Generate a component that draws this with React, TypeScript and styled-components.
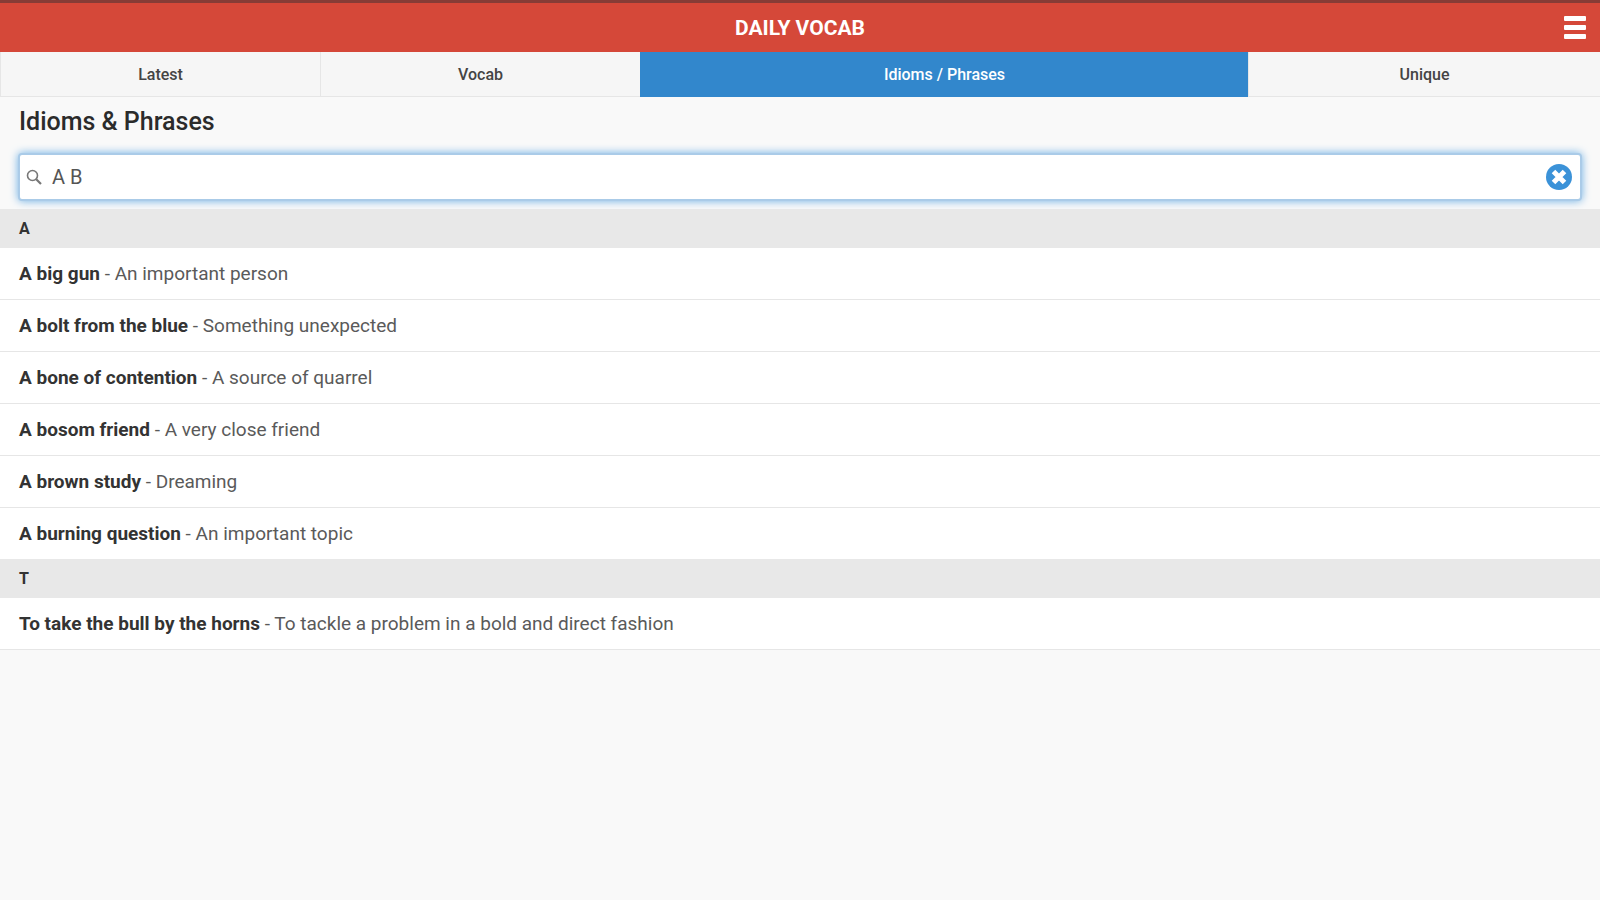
import React, { useState } from "react";
import styled, { createGlobalStyle } from "styled-components";

const GlobalStyle = createGlobalStyle`
  *, *::before, *::after { box-sizing: border-box; }
  body {
    margin: 0;
    background: #f9f9f9;
    color: #333;
    font-family: Roboto, "Liberation Sans", sans-serif;
    font-size: 19px;
    line-height: 24px;
  }
`;

const Header = styled.header`
  display: grid;
  grid-template-columns: 50px 1fr 50px;
  align-items: center;
  height: 52px;
  border-top: 3px solid #863c36;
  background: #d54839;
  color: #fff;
`;

const Title = styled.h1`
  grid-column: 2;
  margin: 0;
  font-size: 21px;
  font-weight: 700;
  line-height: 24px;
  text-align: center;
`;

const MenuButton = styled.button`
  display: flex;
  justify-content: center;
  padding: 8px 4px;
  border: 0;
  background: none;
  color: inherit;
`;

const Tabs = styled.nav`
  display: grid;
  grid-template-columns: 20fr 20fr 38fr 22fr;
`;

const Tab = styled.button<{ $active: boolean }>`
  height: 45px;
  padding: 2px 0 0;
  border: 0 solid ${(p) => (p.$active ? "#3287cc" : "#e6e6e6")};
  border-width: 0 0 1px 1px;
  background: ${(p) => (p.$active ? "#3287cc" : "#f6f6f6")};
  color: ${(p) => (p.$active ? "#fff" : "#444")};
  font-family: inherit;
  font-size: 16px;
  font-weight: 500;
  line-height: 24px;
`;

const SearchSection = styled.section`
  padding: 9px 18px 8px;
`;

const Heading = styled.h2`
  margin: 0 1px 15px;
  color: #2b2b2b;
  font-size: 25px;
  font-weight: 500;
  line-height: 32px;
`;

const SearchBox = styled.div`
  display: flex;
  align-items: center;
  height: 48px;
  padding: 0 8px 0 6px;
  border: 2px solid #aacbe8;
  border-radius: 4px;
  background: #fff;
  box-shadow: 0 0 8px #6cafe4;
`;

const SearchInput = styled.input`
  flex: 1;
  min-width: 0;
  padding: 0 10px;
  border: 0;
  outline: 0;
  background: none;
  color: #555;
  font-family: inherit;
  font-size: 20px;
  line-height: 24px;
`;

const ClearButton = styled.button`
  display: flex;
  padding: 0;
  border: 0;
  background: none;
`;

const Divider = styled.h3`
  display: flex;
  align-items: center;
  height: 39px;
  margin: 0;
  padding: 0 19px;
  background: #e8e8e8;
  color: #333;
  font-size: 16px;
  font-weight: 700;
`;

const Entries = styled.ul`
  margin: 0;
  padding: 0;
  background: #fff;
  list-style: none;

  &:last-child {
    border-bottom: 1px solid #e6e6e6;
  }
`;

const Entry = styled.li`
  padding: 14px 19px 13px;
  color: #5a5a5a;

  & + & {
    border-top: 1px solid #e6e6e6;
  }
`;

const Phrase = styled.strong`
  color: #333;
  font-weight: 700;
`;

const tabs = ["Latest", "Vocab", "Idioms / Phrases", "Unique"];

const groups = [
  {
    letter: "A",
    items: [
      ["A big gun", "An important person"],
      ["A bolt from the blue", "Something unexpected"],
      ["A bone of contention", "A source of quarrel"],
      ["A bosom friend", "A very close friend"],
      ["A brown study", "Dreaming"],
      ["A burning question", "An important topic"],
    ],
  },
  {
    letter: "T",
    items: [
      ["To take the bull by the horns", "To tackle a problem in a bold and direct fashion"],
    ],
  },
];

const MenuIcon = () => (
  <svg width="22" height="24" viewBox="0 0 22 24" fill="currentColor" aria-hidden="true">
    <rect y="0" width="22" height="5" rx="1" />
    <rect y="9" width="22" height="5" rx="1" />
    <rect y="18" width="22" height="5" rx="1" />
  </svg>
);

const SearchIcon = () => (
  <svg width="16" height="16" viewBox="0 0 16 16" fill="none" stroke="#777" aria-hidden="true">
    <circle cx="6.5" cy="6.5" r="5" strokeWidth="1.6" />
    <path d="M10.2 10.2 15 15" strokeWidth="2.2" />
  </svg>
);

const ClearIcon = () => (
  <svg width="26" height="26" viewBox="0 0 26 26" aria-hidden="true">
    <circle cx="13" cy="13" r="13" fill="#3b92d8" />
    <path d="M7.5 7.5 18.5 18.5M18.5 7.5 7.5 18.5" stroke="#fff" strokeWidth="5" />
  </svg>
);

export default function App() {
  const [tab, setTab] = useState("Idioms / Phrases");
  const [query, setQuery] = useState("A B");

  return (
    <>
      <GlobalStyle />
      <Header>
        <Title>DAILY VOCAB</Title>
        <MenuButton type="button" aria-label="Menu">
          <MenuIcon />
        </MenuButton>
      </Header>
      <Tabs>
        {tabs.map((name) => (
          <Tab key={name} type="button" $active={name === tab} onClick={() => setTab(name)}>
            {name}
          </Tab>
        ))}
      </Tabs>
      <main>
        <SearchSection>
          <Heading>Idioms &amp; Phrases</Heading>
          <SearchBox>
            <SearchIcon />
            <SearchInput
              aria-label="Search idioms and phrases"
              value={query}
              onChange={(e) => setQuery(e.target.value)}
            />
            <ClearButton type="button" aria-label="Clear search" onClick={() => setQuery("")}>
              <ClearIcon />
            </ClearButton>
          </SearchBox>
        </SearchSection>
        {groups.map((group) => (
          <React.Fragment key={group.letter}>
            <Divider>{group.letter}</Divider>
            <Entries>
              {group.items.map(([phrase, meaning]) => (
                <Entry key={phrase}>
                  <Phrase>{phrase}</Phrase> - {meaning}
                </Entry>
              ))}
            </Entries>
          </React.Fragment>
        ))}
      </main>
    </>
  );
}
